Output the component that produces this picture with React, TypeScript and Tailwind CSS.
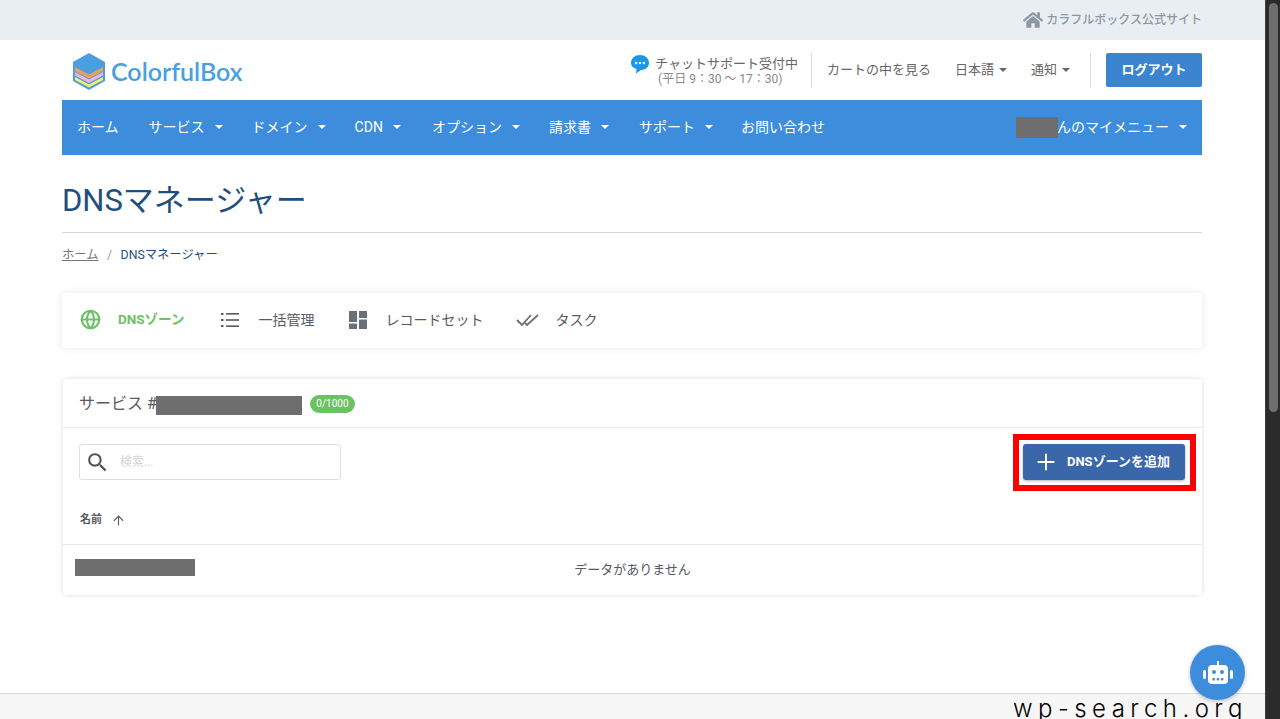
import { ArrowUp, Globe, Plus } from "lucide-react";
import { FaHome } from "react-icons/fa";
import { MdSearch } from "react-icons/md";
import type { ReactNode } from "react";

const navItems = [
  { label: "ホーム", caret: false, gap: "mr-[30px]" },
  { label: "サービス", caret: true, gap: "mr-[29px]" },
  { label: "ドメイン", caret: true, gap: "mr-[29px]" },
  { label: "CDN", caret: true, gap: "mr-[31px]" },
  { label: "オプション", caret: true, gap: "mr-[29px]" },
  { label: "請求書", caret: true, gap: "mr-[30px]" },
  { label: "サポート", caret: true, gap: "mr-[28px]" },
  { label: "お問い合わせ", caret: false, gap: "" },
];

function Caret({ className = "" }: { className?: string }) {
  return (
    <span
      className={`inline-block w-0 h-0 border-x-[4px] border-x-transparent border-t-[4px] border-t-current ${className}`}
    />
  );
}

function Logo() {
  return (
    <div className="mt-[3px] flex items-center">
      <svg width="34" height="38" viewBox="0 0 34 38">
        <path d="M17 0 L33 9 V28 L17 37 L1 28 V9 Z" fill="#4a9fe0" />
        <path d="M3 14 L17 21.5 L31 14 V18 L17 25.5 L3 18 Z" fill="#e9a05f" />
        <path d="M3 19 L17 26.5 L31 19 V22.5 L17 30 L3 22.5 Z" fill="#eeb6d3" />
        <path d="M3 24 L17 31.5 L31 24 V27 L17 34.5 L3 27 Z" fill="#f7ee6b" />
      </svg>
      <span className="ml-[5px] text-[25px] font-semibold leading-none text-[#4a9fe0] font-['Lato',sans-serif]">
        ColorfulBox
      </span>
    </div>
  );
}

function TabItem({ icon, label, active, className }: { icon: ReactNode; label: string; active?: boolean; className: string }) {
  return (
    <div className={`flex items-center ${className}`}>
      {icon}
      <span className={active ? "text-[13.5px] font-bold text-[#6cc164]" : "text-sm text-[#555b64]"}>{label}</span>
    </div>
  );
}

function BotIcon() {
  return (
    <svg width="30" height="24" viewBox="0 0 30 24">
      <rect x="14" y="0" width="2" height="5" fill="#fff" />
      <rect x="5" y="4" width="20" height="19" rx="4" fill="#fff" />
      <rect x="0" y="9" width="3" height="9" rx="1.5" fill="#fff" />
      <rect x="27" y="9" width="3" height="9" rx="1.5" fill="#fff" />
      <circle cx="11" cy="11" r="2" fill="#3e8ddd" />
      <circle cx="19" cy="11" r="2" fill="#3e8ddd" />
      <rect x="9.5" y="17" width="2.4" height="2.4" fill="#3e8ddd" />
      <rect x="13.8" y="17" width="2.4" height="2.4" fill="#3e8ddd" />
      <rect x="18" y="17" width="2.4" height="2.4" fill="#3e8ddd" />
    </svg>
  );
}

export default function App() {
  return (
    <div className="relative flex h-[719px] w-[1280px] overflow-hidden bg-white font-['Roboto','Noto_Sans_CJK_JP',sans-serif]">
      <div className="flex w-[1265px] flex-col">
        <div className="flex h-10 shrink-0 items-center justify-end bg-[#e9eef2] pr-[63px]">
          <FaHome className="mr-[3px] h-[20px] w-[20px] text-[#8b98a3]" />
          <span className="text-xs font-medium text-[#8b98a3]">カラフルボックス公式サイト</span>
        </div>

        <div className="ml-[62px] w-[1140px] flex-1">
          <header className="flex h-[60px] items-center pl-[10px]">
            <Logo />
            <div className="ml-auto flex items-center">
              <div className="mr-[13px] flex items-start pt-[3px]">
                <svg width="20" height="20" viewBox="0 0 20 20" className="mr-[5px] mt-[-2px]">
                  <path d="M10 1 C15 1 19 4.5 19 9 C19 13 15.5 16 11 16 L6 19.5 L6.5 15 C3 14 1 12 1 9 C1 4.5 5 1 10 1 Z" fill="#1e96e6" />
                  <circle cx="6.2" cy="9" r="1.2" fill="#fff" />
                  <circle cx="10" cy="9" r="1.2" fill="#fff" />
                  <circle cx="13.8" cy="9" r="1.2" fill="#fff" />
                </svg>
                <div>
                  <div className="text-[13px] leading-[16px] text-[#666]">チャットサポート受付中</div>
                  <div className="pl-[3px] text-xs leading-[15px] text-[#8a8a8a]">(平日 9：30 〜 17：30)</div>
                </div>
              </div>
              <div className="h-[35px] border-l border-[#dcdcdc]" />
              <span className="ml-[15px] text-[13px] text-[#666]">カートの中を見る</span>
              <span className="ml-[24px] flex items-center text-[13px] text-[#666]">
                日本語 <Caret className="ml-[5px]" />
              </span>
              <span className="ml-[24px] flex items-center text-[13px] text-[#666]">
                通知 <Caret className="ml-[5px]" />
              </span>
              <div className="ml-[20px] h-[35px] border-l border-[#dcdcdc]" />
              <button className="ml-[15px] h-[34px] w-[96px] rounded-[2px] bg-[#3b84d0] text-[13px] font-bold text-white">
                ログアウト
              </button>
            </div>
          </header>

          <nav className="relative flex h-[55px] items-center bg-[#3e8ddd] pb-[1px] pl-[15px] pr-[15px] text-sm text-white">
            {navItems.map((item) => (
              <div key={item.label} className={`flex items-center ${item.gap}`}>
                {item.label}
                {item.caret && <Caret className="ml-[10px]" />}
              </div>
            ))}
            <div className="ml-auto flex items-center">
              さんのマイメニュー
              <Caret className="ml-[10px]" />
            </div>
            <div className="absolute left-[954px] top-[17px] h-[21px] w-[42px] bg-[#6e6e6e]" />
          </nav>

          <h1 className="mt-[29px] text-[31px] font-normal leading-[34px] text-[#1f4f7e]">DNSマネージャー</h1>
          <div className="mt-[14px] border-t border-[#d8d8d8]" />
          <div className="mt-[13px] flex items-center text-[12.3px] leading-[18px]">
            <span className="text-[#777] underline">ホーム</span>
            <span className="mx-[8.5px] text-[#999]">/</span>
            <span className="text-[#1f4f7e]">DNSマネージャー</span>
          </div>

          <div className="mt-[29px] flex h-[55px] items-center rounded-[3px] bg-white pb-[2px] pl-[18px] shadow-[0_0_8px_rgba(0,0,0,0.09)]">
            <TabItem
              className="mr-[37px]"
              active
              label="DNSゾーン"
              icon={<Globe className="mr-[17px] h-[21px] w-[21px] text-[#6cc164]" strokeWidth={2.4} />}
            />
            <TabItem
              className="mr-[35px]"
              label="一括管理"
              icon={
                <svg width="18" height="16" viewBox="0 0 18 16" className="mr-[19px]" fill="#555b64">
                  <rect x="0" y="1" width="2.5" height="2" />
                  <rect x="5" y="1" width="13" height="1.6" />
                  <rect x="0" y="7" width="2.5" height="2" />
                  <rect x="5" y="7.2" width="13" height="1.6" />
                  <rect x="0" y="13" width="2.5" height="2" />
                  <rect x="5" y="13.4" width="13" height="1.6" />
                </svg>
              }
            />
            <TabItem
              className="mr-[33px]"
              label="レコードセット"
              icon={
                <svg width="18" height="18" viewBox="0 0 18 18" className="mr-[18px]" fill="#6b7078">
                  <rect x="0" y="0" width="8" height="11" />
                  <rect x="10" y="0" width="8" height="7" />
                  <rect x="0" y="12.5" width="8" height="5.5" />
                  <rect x="10" y="8.5" width="8" height="9.5" />
                </svg>
              }
            />
            <TabItem
              className=""
              label="タスク"
              icon={
                <svg width="24" height="14" viewBox="0 0 24 14" className="mr-[15px]" fill="none" stroke="#6b7078" strokeWidth="1.8">
                  <path d="M1 7 L6 12 L15 2" />
                  <path d="M9 10 L11 12 L22 2" />
                </svg>
              }
            />
          </div>

          <div className="ml-px mt-[31px] h-[216px] rounded-[3px] bg-white shadow-[0_0_5px_rgba(0,0,0,0.14)]">
            <div className="relative flex h-[49px] items-center border-b border-[#ececec] pl-[16px] pt-[2px]">
              <span className="text-base text-[#555b64]">サービス #</span>
              <div className="absolute left-[93px] top-[17px] h-[19px] w-[146px] bg-[#6e6e6e]" />
              <span className="ml-[153px] rounded-full bg-[#6cc164] px-[6.5px] text-[10px] leading-[18px] text-white">0/1000</span>
            </div>
            <div className="flex items-start justify-between pl-[16px] pr-[6px] pt-[6px]">
              <div className="mt-[10px] flex h-[36px] w-[262px] items-center rounded-[3px] border border-[#dcdfe4] pl-[5px]">
                <MdSearch className="h-[25px] w-[25px] text-[#4f5359]" />
                <span className="ml-[10px] text-xs text-[#d5d5d5]">検索...</span>
              </div>
              <div className="border-[6px] border-[#fe0000] bg-white pb-[5px] pl-[4px] pr-[5px] pt-[4px]">
                <button className="flex h-[36px] w-[162px] items-center rounded-[3px] bg-[#3a66aa] pl-[10px] text-[13px] font-bold text-white shadow-[0_1px_3px_rgba(0,0,0,0.3)]">
                  <Plus className="mr-[8px] h-[26px] w-[26px]" strokeWidth={1.8} />
                  DNSゾーンを追加
                </button>
              </div>
            </div>
            <div className="mt-[16px] flex h-[38px] items-start border-b border-[#e6e6ea] pl-[17px] text-[11px] font-bold text-[#555b64]">
              <span className="mt-[5px] flex items-center">
                名前
                <ArrowUp className="ml-[9px] h-[15px] w-[15px] text-[#555b64]" strokeWidth={1.8} />
              </span>
            </div>
            <div className="relative flex h-[49px] items-center justify-center text-[13px] text-[#555b64]">
              データがありません
              <div className="absolute left-[12px] top-[14px] h-[17px] w-[120px] bg-[#6e6e6e]" />
            </div>
          </div>
        </div>

        <div className="h-[26px] shrink-0 border-t border-[#dcdcdc] bg-[#f6f6f6]" />
      </div>

      <div className="flex w-[15px] justify-center border-l border-[#3c3c3c] bg-[#2b2b2b] pt-[3px]">
        <div className="h-[409px] w-[9px] rounded-full bg-[#6e6e6e]" />
      </div>

      <div className="absolute left-[1190px] top-[645px] flex h-[55px] w-[55px] items-center justify-center rounded-full bg-[#3e8ddd] shadow-[0_1px_4px_rgba(0,0,0,0.25)]">
        <BotIcon />
      </div>
      <div className="absolute left-[1013px] top-[699px] text-[24px] font-light leading-[20px] tracking-[5.45px] text-black font-['Inter',sans-serif]">
        wp-search.org
      </div>
    </div>
  );
}
